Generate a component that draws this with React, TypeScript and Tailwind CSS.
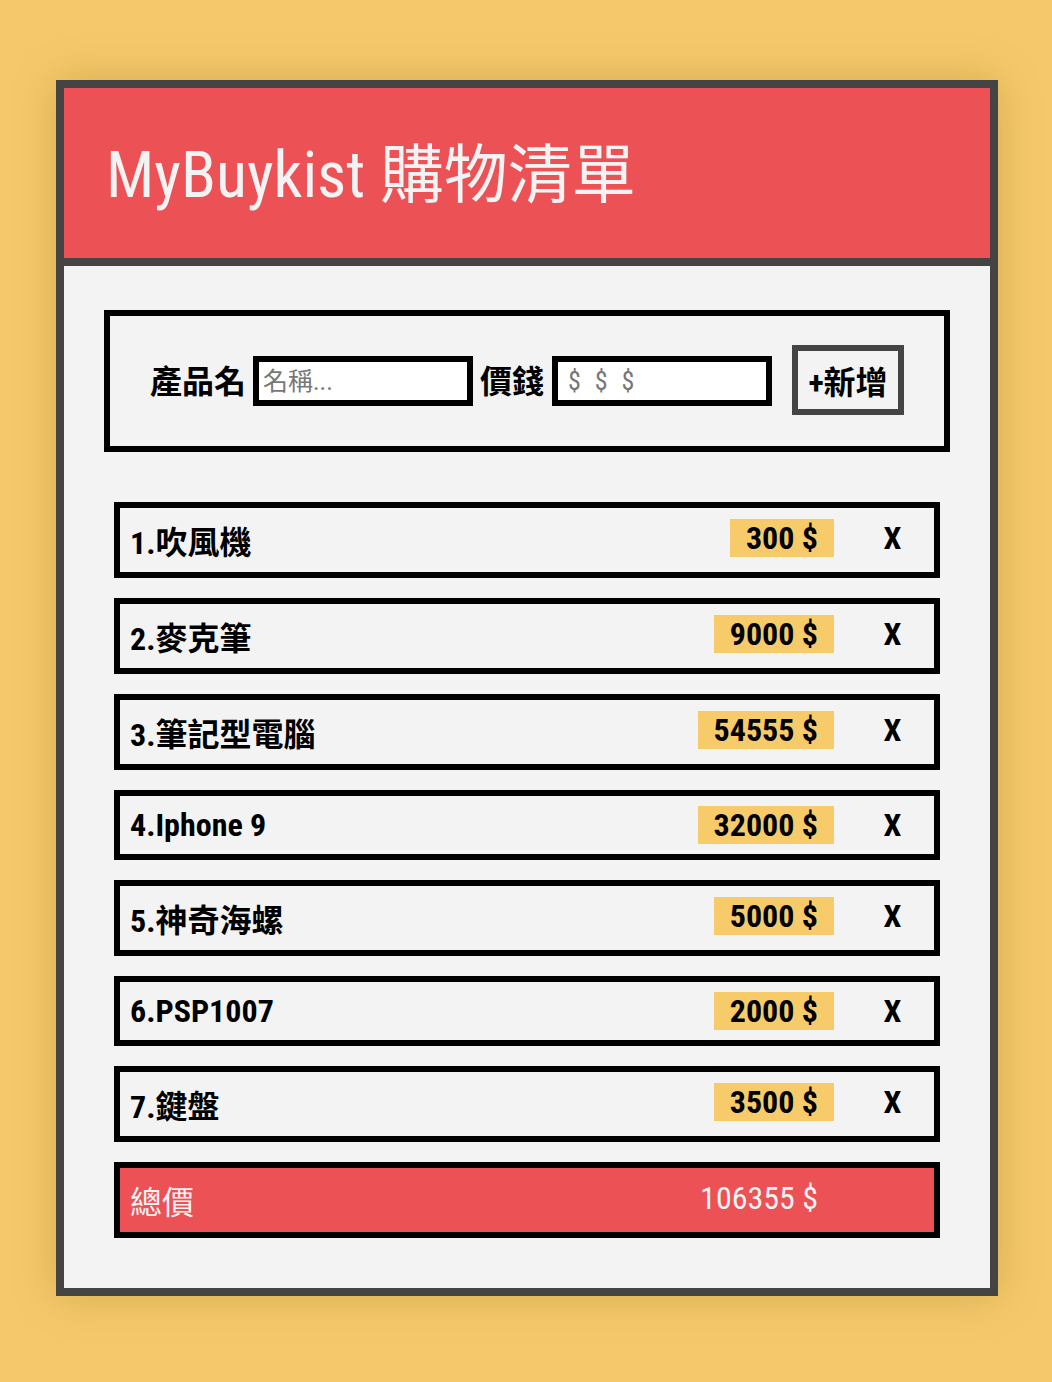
import React from "react";

const items = [
  { name: "吹風機", price: 300 },
  { name: "麥克筆", price: 9000 },
  { name: "筆記型電腦", price: 54555 },
  { name: "Iphone 9", price: 32000 },
  { name: "神奇海螺", price: 5000 },
  { name: "PSP1007", price: 2000 },
  { name: "鍵盤", price: 3500 },
];

const font =
  "font-['Roboto_Condensed','Liberation_Sans_Narrow','DejaVu_Sans_Condensed',Roboto,'Noto_Sans_CJK_TC',sans-serif] font-stretch-condensed";

const hasCjk = (s: string) => /[\u4e00-\u9fff]/.test(s);

export default function App() {
  const total = items.reduce((sum, item) => sum + item.price, 0);

  return (
    <div className={`min-h-[1382px] bg-[#f5c96b] pt-[80px] pb-[86px] leading-[normal] ${font}`}>
      <div className="ml-[56px] w-[942px] border-8 border-[#444] bg-[#f3f3f3] shadow-[0_0_40px_rgba(120,80,0,0.25)]">
        {/* HEADER */}
        <header className="flex h-[178px] items-center border-b-8 border-[#444] bg-[#eb5155] pb-[8px] pl-[42px]">
          <h1 className="text-[64px] font-normal text-[#f3f3f3]">MyBuykist 購物清單</h1>
        </header>

        <div className="px-[40px] pt-[44px] pb-[50px]">
          {/* FORM */}
          <div className="flex h-[142px] items-center justify-center border-[6px] border-black">
            <label className="mb-[4px] text-[32px] font-bold text-black">產品名</label>
            <input
              placeholder="名稱..."
              className="ml-[7px] h-[50px] w-[220px] border-[6px] border-black bg-white px-[4px] text-[25px] outline-none placeholder:text-[#777]"
            />
            <label className="mb-[4px] ml-[7px] text-[32px] font-bold text-black">價錢</label>
            <input
              placeholder="$ $ $"
              className="ml-[8px] h-[50px] w-[220px] border-[6px] border-black bg-white px-[10px] text-[26px] tracking-[4px] outline-none placeholder:text-[#777]"
            />
            <button className="mb-[2px] ml-[20px] h-[70px] w-[112px] border-[6px] border-[#444] text-[32px] font-bold text-black">
              +新增
            </button>
          </div>

          {/* LIST */}
          <ul className="mx-[10px] mt-[50px] flex flex-col gap-[20px]">
            {items.map((item, i) => (
              <li
                key={item.name}
                className={`flex items-center border-[6px] border-black pl-[10px] text-[32px] font-bold text-black ${
                  hasCjk(item.name) ? "h-[76px]" : "h-[70px]"
                }`}
              >
                <span className="flex-1">
                  {i + 1}.{item.name}
                </span>
                <span
                  className={`flex h-[38px] items-center bg-[#f7cb6a] px-4 ${hasCjk(item.name) ? "mb-[4px]" : ""}`}
                >
                  {item.price} $
                </span>
                <span className={`ml-[17px] w-[83px] text-center ${hasCjk(item.name) ? "mb-[4px]" : ""}`}>X</span>
              </li>
            ))}
            <li className="flex h-[76px] items-center border-[6px] border-black bg-[#eb5155] pl-[10px] text-[32px] font-normal text-[#f3f3f3]">
              <span className="flex-1">總價</span>
              <span className="mb-[4px] px-4">{total} $</span>
              <span className="ml-[17px] w-[83px]" />
            </li>
          </ul>
        </div>
      </div>
    </div>
  );
}
